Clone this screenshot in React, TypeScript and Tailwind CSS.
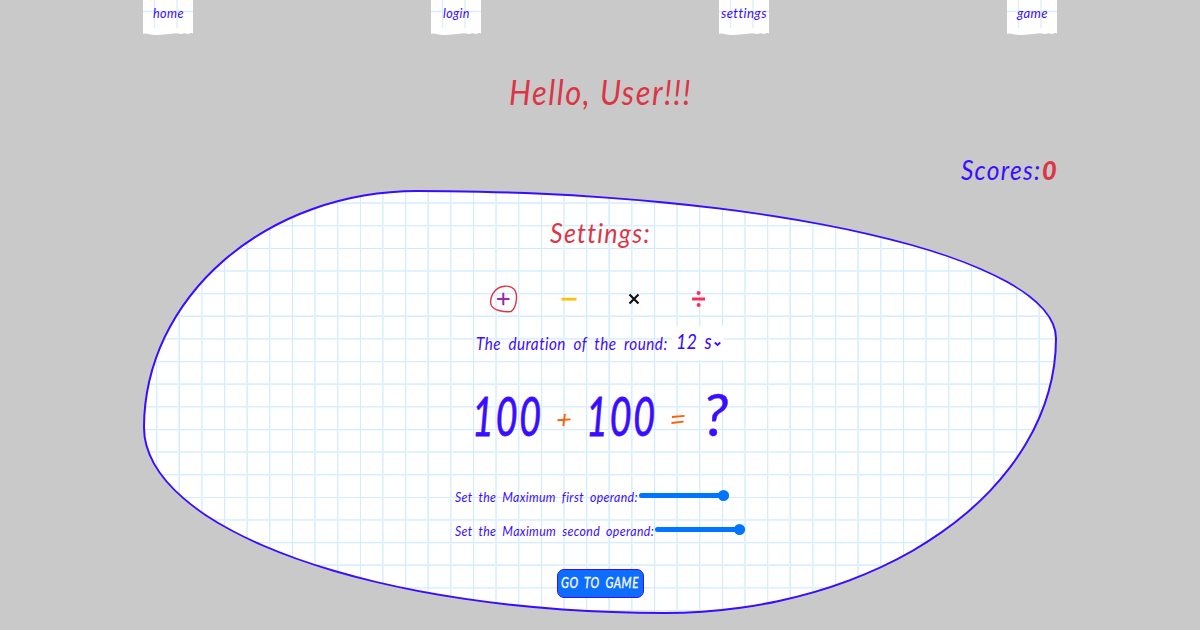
import { useLayoutEffect, useRef, useState, type ReactNode } from "react";

const HAND = "font-['Lato','Open_Sans',sans-serif] italic [font-variant-ligatures:none]";

/** A single line of lettering, condensed or stretched to fill its box. */
function Lettering({ className, children }: { className: string; children: ReactNode }) {
  const box = useRef<HTMLSpanElement>(null);
  const ink = useRef<HTMLSpanElement>(null);
  const [scale, setScale] = useState(1);
  useLayoutEffect(() => {
    const fit = () => {
      if (box.current && ink.current) setScale(box.current.clientWidth / ink.current.offsetWidth);
    };
    fit();
    document.fonts.ready.then(fit);
  }, []);
  return (
    <span ref={box} className={`block shrink-0 whitespace-nowrap ${className}`}>
      <span ref={ink} className="inline-block origin-left" style={{ transform: `scaleX(${scale})` }}>
        {children}
      </span>
    </span>
  );
}

function Tab({ label, width }: { label: string; width: string }) {
  return (
    <a href="#" className="relative flex h-[35px] w-[50px] justify-center text-[#3a0dff]">
      <svg className="absolute inset-0" width="50" height="35" viewBox="0 0 50 35">
        <path
          d="M0 0H50V33.5L48 33L45 34L42 33.2L38 34L34 33.3L30 33.6L27 34L23 34.3L18 34.8L14 35L9 34.7L5 34L2 33.6L0 34Z"
          fill="#fff"
        />
        <path d="M11.5 0V28M34 0V28M0 11.5H50" stroke="#d9efff" strokeWidth="1.3" />
      </svg>
      <Lettering className={`relative pt-1 text-[13.5px] leading-[18px] tracking-[0.03em] ${width}`}>{label}</Lettering>
    </a>
  );
}

function Range({ label, width }: { label: string; width: string }) {
  return (
    <label className="flex h-[34px] items-center">
      <Lettering className={`mt-px text-[13.5px] leading-[20px] tracking-[0.03em] [word-spacing:3px] ${width}`}>
        {label}
      </Lettering>
      <span className="relative -mt-px ml-px h-[5px] w-[90px] rounded-full bg-[#0075ff]">
        <span className="absolute -top-[3px] right-0 size-[11px] rounded-full bg-[#0075ff]" />
      </span>
    </label>
  );
}

export default function App() {
  return (
    <div className={`h-[630px] overflow-hidden bg-[#c9c9c9] ${HAND}`}>
      <div className="mx-auto w-[914px]">
        <nav className="flex h-[35px] justify-between">
          <Tab label="home" width="w-[31px]" />
          <Tab label="login" width="w-[27px]" />
          <Tab label="settings" width="w-[46px]" />
          <Tab label="game" width="w-[31px]" />
        </nav>

        <h1 className="flex justify-center pt-[37px] text-[#dc3545]">
          <Lettering className="w-[183px] text-[34px] leading-[40px] tracking-[0.05em]">Hello, User!!!</Lettering>
        </h1>

        <div className="flex justify-end pt-[42px] text-[27px] leading-[32px]">
          <Lettering className="w-[80px] tracking-[0.05em] text-[#3a0dff]">Scores:</Lettering>
          <Lettering className="ml-px w-[15px] font-black text-[#dc3545]">0</Lettering>
        </div>

        <main className="mt-[3.5px] h-[424px] overflow-hidden rounded-[30%_70%_43%_57%/56%_35%_65%_44%] border-2 border-[#3a0dff] bg-white bg-[repeating-linear-gradient(90deg,#e6f5ff_0,#cfeaff_0.9px,#e6f5ff_1.4px,transparent_2px,transparent_22.63px),repeating-linear-gradient(180deg,#e6f5ff_0,#cfeaff_0.9px,#e6f5ff_1.4px,transparent_2px,transparent_22.63px)] bg-[position:-11.8px_-12.3px] bg-[length:950px_460px] bg-no-repeat text-[#3a0dff]">
          <div className="flex flex-col items-center">
            <h2 className="mt-[25.5px] text-[#dc3545]">
              <Lettering className="w-[101px] text-[27px] leading-[32px] tracking-[0.05em]">Settings:</Lettering>
            </h2>

            <div className="mr-[5px] mt-[32px] flex h-[36px] items-center">
              <svg width="28" height="28" viewBox="0 0 28 28" fill="none">
                <path
                  d="M14.5 1.2C22.5 .5 26.8 5 26.5 13C26.3 19 24.5 24 21 26.6C14.5 27 4.5 26 1.3 20.5C-1 14 3.5 2 14.5 1.2Z"
                  stroke="#dc3545"
                  strokeWidth="1.4"
                />
                <path d="M13.3 7.8V20.2M7.1 14H19.5" stroke="#9c27b0" strokeWidth="2" />
              </svg>
              <svg className="ml-[43px]" width="16" height="16" viewBox="0 0 16 16">
                <path d="M.5 8.2H15.5" stroke="#ffc107" strokeWidth="2.8" />
              </svg>
              <svg className="ml-[51px]" width="12" height="12" viewBox="0 0 12 12">
                <path d="M1.5 1.5L10.5 10.5M10.5 1.5L1.5 10.5" stroke="#111" strokeWidth="2.2" />
              </svg>
              <svg className="ml-[52px]" width="14" height="16" viewBox="0 0 14 16" fill="#ff2b55">
                <circle cx="6.6" cy="2" r="2" />
                <path d="M.1 6.5H13.1V9.5H.1Z" />
                <circle cx="6.6" cy="14" r="2" />
              </svg>
            </div>

            <div className="mt-[8.5px] flex h-[34px] items-center">
              <Lettering className="mt-[2px] w-[192px] text-[17.5px] leading-[24px] tracking-[0.03em] [word-spacing:4px]">
                The duration of the round:
              </Lettering>
              <span className="ml-[4px] flex h-[34px] w-[52px] items-center gap-[2px] bg-white pl-[4px]">
                <Lettering className="-mt-[3px] w-[36px] text-[21px] leading-[28px] [word-spacing:4px]">12 s</Lettering>
                <svg className="mt-[2px]" width="7" height="8" viewBox="0 0 7 8" fill="none">
                  <path d="M.7 2.5L3.5 5L6.3 2.5" stroke="#3a0dff" strokeWidth="1.7" />
                </svg>
              </span>
            </div>

            <div className="mt-[21.5px] flex h-[70px] w-[256px] items-center">
              <Lettering className="-mt-px w-[71px] text-[54px] leading-[70px] tracking-[0.05em] [-webkit-text-stroke:0.8px_#3a0dff]">
                100
              </Lettering>
              <svg width="15" height="14" viewBox="0 0 15 14" className="ml-[14px] mt-[7px]" fill="none">
                <path d="M.5 7.3L14.5 6.4M8.5 .5L6.8 13.5" stroke="#ff5f05" strokeWidth="2" />
              </svg>
              <Lettering className="-mt-px ml-[15px] w-[71px] text-[54px] leading-[70px] tracking-[0.05em] [-webkit-text-stroke:0.8px_#3a0dff]">
                100
              </Lettering>
              <svg width="15" height="11" viewBox="0 0 15 11" className="ml-[14px] mt-[7px]" fill="none">
                <path d="M1 2.8L14.5 1.6M.5 9.2L13.5 7.7" stroke="#ff5f05" strokeWidth="2" />
              </svg>
              <Lettering className="-mt-[5px] ml-[18px] w-[25px] text-[58px] leading-[70px] [-webkit-text-stroke:0.4px_#3a0dff]">
                ?
              </Lettering>
            </div>

            <div className="mt-[28px] w-[290px]">
              <Range label="Set the Maximum first operand:" width="w-[183px]" />
              <Range label="Set the Maximum second operand:" width="w-[199px]" />
            </div>

            <button className="mt-[22px] flex h-[29px] w-[87px] items-center justify-center rounded-[7px] border border-[#3a0dff] bg-[#0d6efd] text-white">
              <Lettering className="-mt-[2px] w-[78px] text-[14.5px] leading-[22px] tracking-[0.05em] italic [-webkit-text-stroke:0.3px_white] [word-spacing:3px]">
                GO TO GAME
              </Lettering>
            </button>
          </div>
        </main>
      </div>
    </div>
  );
}
